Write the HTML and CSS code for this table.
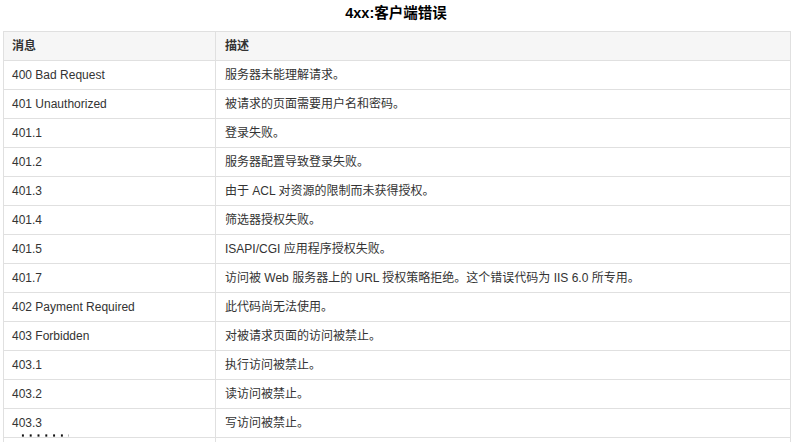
FILE: index.html
```html
<!DOCTYPE html>
<html lang="zh">
<head>
<meta charset="utf-8">
<title>4xx:客户端错误</title>
<link rel="stylesheet" href="styles.css">
</head>
<body>
<div class="page">
  <h2 class="title">4xx:客户端错误</h2>
  <div class="table-wrap">
    <table class="codes">
      <thead>
        <tr><th class="c1">消息</th><th>描述</th></tr>
      </thead>
      <tbody>
        <tr><td>400 Bad Request</td><td>服务器未能理解请求。</td></tr>
        <tr><td>401 Unauthorized</td><td>被请求的页面需要用户名和密码。</td></tr>
        <tr><td>401.1</td><td>登录失败。</td></tr>
        <tr><td>401.2</td><td>服务器配置导致登录失败。</td></tr>
        <tr><td>401.3</td><td>由于 ACL 对资源的限制而未获得授权。</td></tr>
        <tr><td>401.4</td><td>筛选器授权失败。</td></tr>
        <tr><td>401.5</td><td>ISAPI/CGI 应用程序授权失败。</td></tr>
        <tr><td>401.7</td><td>访问被 Web 服务器上的 URL 授权策略拒绝。这个错误代码为 IIS 6.0 所专用。</td></tr>
        <tr><td>402 Payment Required</td><td>此代码尚无法使用。</td></tr>
        <tr><td>403 Forbidden</td><td>对被请求页面的访问被禁止。</td></tr>
        <tr><td>403.1</td><td>执行访问被禁止。</td></tr>
        <tr><td>403.2</td><td>读访问被禁止。</td></tr>
        <tr><td>403.3</td><td>写访问被禁止。</td></tr>
        <tr class="empty"><td></td><td></td></tr>
      </tbody>
    </table>
    <span class="dots"></span>
  </div>
</div>
</body>
</html>
```
FILE: styles.css
```css
html, body {
  margin: 0;
  padding: 0;
  background: #fff;
  overflow: hidden;
}
.page {
  padding: 0 0 0 3px;
  font-family: "Liberation Sans", Arial, "Noto Sans CJK SC", sans-serif;
  color: #333;
}
.title {
  margin: 0;
  height: 31px;
  line-height: 27px;
  font-size: 14.5px;
  font-weight: bold;
  text-align: center;
  color: #000;
  padding-right: 3px;
}
.table-wrap {
  position: relative;
}
.codes {
  width: 788px;
  border-collapse: collapse;
  table-layout: fixed;
  font-size: 12px;
}
.codes th,
.codes td {
  border: 1px solid #e0e0e0;
  padding: 5px 8px 5px 9px;
  line-height: 18px;
  text-align: left;
  vertical-align: middle;
  white-space: nowrap;
}
.codes th {
  background: #f6f6f6;
  font-weight: bold;
  color: #333;
}
.codes th.c1 {
  width: 195px;
}
.codes td:first-child,
.codes th:first-child {
  padding-left: 8px;
}
.codes tr.empty td {
  height: 18px;
}
.dots {
  position: absolute;
  left: 16px;
  top: 403px;
  width: 50px;
  height: 3px;
  background-image: radial-gradient(circle, #111 1px, transparent 1.3px);
  background-size: 7.8px 3px;
  background-repeat: repeat-x;
}
```
